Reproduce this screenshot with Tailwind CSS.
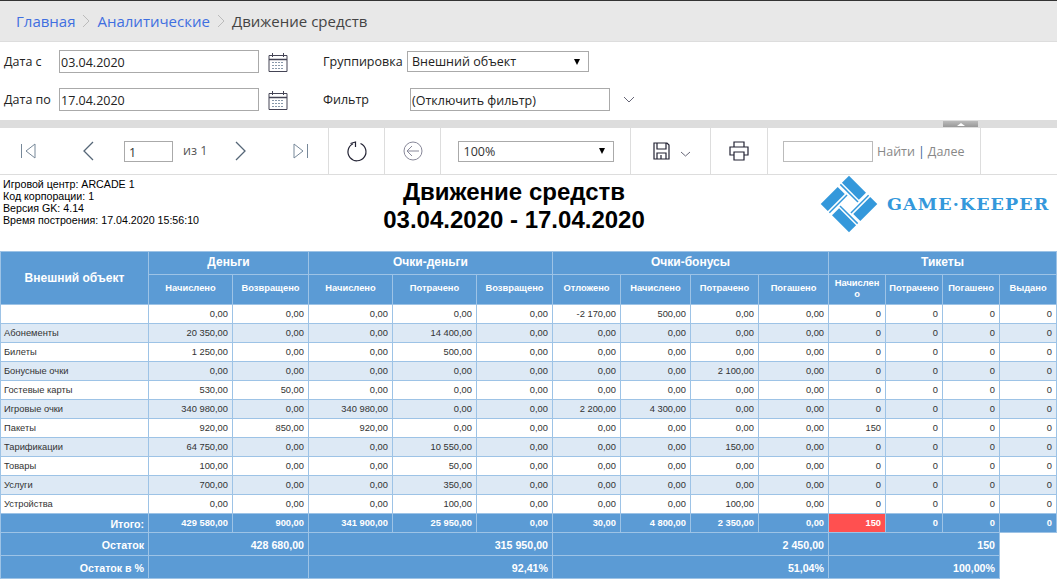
<!DOCTYPE html>
<html lang="ru">
<head>
    <meta charset="UTF-8">
    <title>Движение средств</title>
    <script src="https://cdn.jsdelivr.net/npm/@tailwindcss/browser@4"></script>
</head>
<body class="h-[580px] overflow-hidden bg-white font-['Open_Sans',sans-serif] text-[#333]">
    <!-- breadcrumb -->
    <div class="h-[42px] flex items-center pl-[16px] bg-[#e8e8e8] border-t border-t-[#333] border-b border-b-[#ddd] text-[15px]">
        <a class="text-[#3f6fe0]">Главная</a>
        <svg class="w-[8px] h-[14px] mx-[7px]" viewBox="0 0 8 14" fill="none" stroke="#bbb"><path d="M1 1l6 6-6 6"/></svg>
        <a class="text-[#3f6fe0]">Аналитические</a>
        <svg class="w-[8px] h-[14px] mx-[7px]" viewBox="0 0 8 14" fill="none" stroke="#bbb"><path d="M1 1l6 6-6 6"/></svg>
        <span class="text-[#444]">Движение средств</span>
    </div>

    <!-- filters -->
    <div class="h-[78px] pl-[4px] pt-[8px] text-[12.5px] text-[#222]">
        <div class="flex items-center h-[23px]">
            <span class="w-[55px] pt-[2px]">Дата с</span>
            <div class="w-[200px] h-[23px] border border-[#aaa] px-[1px] leading-[23px]">03.04.2020</div>
            <svg class="w-[20px] h-[21px] ml-[9px]" viewBox="0 0 20 21" fill="none" stroke="#445"><path d="M1 4.500h18v16H1zM4.500 2v4M15.500 2v4"/><path stroke-width="1.500" d="M1 8.500h18"/><path stroke-dasharray="2 1" stroke="#89a" d="M4 11.500h12M4 14.500h12M4 17.500h12"/></svg>
            <span class="ml-[35px] w-[84px] pt-[2px]">Группировка</span>
            <div class="w-[182px] h-[21px] border border-[#aaa] pl-[4px] pr-[8px] flex items-center justify-between"><span class="pt-[2px]">Внешний объект</span><span class="w-0 h-0 border-x-[3px] border-x-transparent border-t-[6px] border-t-black"></span></div>
        </div>
        <div class="flex items-center h-[23px] mt-[15px]">
            <span class="w-[55px] pt-[2px]">Дата по</span>
            <div class="w-[200px] h-[23px] border border-[#aaa] px-[1px] leading-[23px]">17.04.2020</div>
            <svg class="w-[20px] h-[21px] ml-[9px]" viewBox="0 0 20 21" fill="none" stroke="#445"><path d="M1 4.500h18v16H1zM4.500 2v4M15.500 2v4"/><path stroke-width="1.500" d="M1 8.500h18"/><path stroke-dasharray="2 1" stroke="#89a" d="M4 11.500h12M4 14.500h12M4 17.500h12"/></svg>
            <span class="ml-[35px] w-[87px] pt-[2px]">Фильтр</span>
            <div class="w-[200px] h-[23px] border border-[#aaa] pl-[1px] leading-[23px]">(Отключить фильтр)</div>
            <svg class="w-[12px] h-[7px] ml-[13px]" viewBox="0 0 12 7" fill="none" stroke="#667"><path d="M1 1l5 5 5-5"/></svg>
        </div>
    </div>

    <!-- splitter -->
    <div class="h-[8px] bg-[#ddd] relative">
        <div class="absolute left-[943px] top-[1px] w-[35px] h-[6px] bg-gradient-to-b from-[#bbb] to-[#999] flex items-center justify-center"><span class="w-0 h-0 border-x-[4px] border-x-transparent border-b-[3px] border-b-white"></span></div>
    </div>

    <!-- toolbar -->
    <div class="h-[47px] flex border-b border-[#ddd] text-[12.5px] text-[#555]">
        <div class="w-[329px] flex items-center border-r border-[#ddd]">
            <svg class="w-[16px] h-[16px] ml-[20px]" viewBox="0 0 16 16" fill="none" stroke="#789"><path d="M1.500 1v14M15 1L6 8l9 7z"/></svg>
            <svg class="w-[12px] h-[20px] ml-[46px]" viewBox="0 0 12 20" fill="none" stroke="#567" stroke-width="1.300"><path d="M11 1L2 10l9 9"/></svg>
            <div class="w-[49px] h-[21px] border border-[#aaa] ml-[30px] px-[4px] leading-[21px] text-[#333]">1</div>
            <span class="ml-[10px] pt-[1px]">из 1</span>
            <svg class="w-[12px] h-[20px] ml-[28px]" viewBox="0 0 12 20" fill="none" stroke="#567" stroke-width="1.300"><path d="M1 1l9 9-9 9"/></svg>
            <svg class="w-[16px] h-[16px] ml-[46px]" viewBox="0 0 16 16" fill="none" stroke="#789"><path d="M14.500 1v14M1 1l9 7-9 7z"/></svg>
        </div>
        <div class="w-[56px] flex items-center justify-center border-r border-[#ddd]">
            <svg class="w-[22px] h-[24px]" viewBox="0 0 22 24" fill="none" stroke="#223" stroke-width="1.200"><path d="M7 4.700A9 9 0 1 0 14.500 4.500"/><path d="M4.500 4.500L9.500 3v5"/></svg>
        </div>
        <div class="w-[56px] flex items-center justify-center border-r border-[#ddd]">
            <svg class="w-[20px] h-[20px]" viewBox="0 0 20 20" fill="none" stroke="#889"><circle cx="10" cy="10" r="9"/><path d="M16 10H4M9 5l-5 5 5 5"/></svg>
        </div>
        <div class="w-[190px] flex items-center justify-center border-r border-[#ddd]">
            <div class="w-[156px] h-[21px] border border-[#aaa] pl-[5px] pr-[8px] flex items-center justify-between text-[#333]"><span class="pt-[2px]">100%</span><span class="w-0 h-0 border-x-[3px] border-x-transparent border-t-[6px] border-t-black"></span></div>
        </div>
        <div class="w-[80px] flex items-center border-r border-[#ddd]">
            <svg class="w-[17px] h-[18px] ml-[22px]" viewBox="0 0 17 18" fill="none" stroke="#223" stroke-width="1.200"><path d="M1 1h13l2 2v14H1zM4 1v6h9V1M4 17v-6h9v6M8 13v4"/></svg>
            <svg class="w-[11px] h-[6px] ml-[10px] mt-[5px]" viewBox="0 0 11 6" fill="none" stroke="#667"><path d="M1 1l4.500 4 4.500-4"/></svg>
        </div>
        <div class="w-[57px] flex items-center justify-center border-r border-[#ddd]">
            <svg class="w-[20px] h-[20px]" viewBox="0 0 20 20" fill="none" stroke="#223" stroke-width="1.200"><path d="M5 6V1h10v5M5 14H1V6h18v8h-4M5 11h10v8H5z"/></svg>
        </div>
        <div class="w-[213px] flex items-center pl-[15px] border-r border-[#ddd]">
            <div class="w-[90px] h-[21px] border border-[#bbb]"></div>
            <span class="ml-[4px] pt-[2px] text-[#888]">Найти</span>
            <span class="mx-[3px] pt-[2px] text-[#369]">|</span>
            <span class="pt-[2px] text-[#888]">Далее</span>
        </div>
    </div>

    <!-- report header -->
    <div class="h-[76px] relative font-['Liberation_Sans',sans-serif] text-black">
        <div class="absolute left-[3px] top-[3px] text-[10.67px] leading-[12px]">
            <div>Игровой центр: ARCADE 1</div>
            <div>Код корпорации: 1</div>
            <div>Версия GK: 4.14</div>
            <div>Время построения: 17.04.2020 15:56:10</div>
        </div>
        <div class="text-center w-[1028px] pt-[3px] text-[24px] leading-[28px] font-bold">
            <div>Движение средств</div>
            <div>03.04.2020 - 17.04.2020</div>
        </div>
        <div class="absolute left-[820px] top-0 flex items-center">
            <svg class="w-[58px] h-[58px]" viewBox="-29 -29 58 58" fill="#3498db">
                <g transform="rotate(45)">
                    <g><rect x="-20" y="-20" width="24" height="10"/><rect x="-20" y="-8.500" width="25" height="1.500"/></g>
                    <g transform="rotate(90)"><rect x="-20" y="-20" width="24" height="10"/><rect x="-20" y="-8.500" width="25" height="1.500"/></g>
                    <g transform="rotate(180)"><rect x="-20" y="-20" width="24" height="10"/><rect x="-20" y="-8.500" width="25" height="1.500"/></g>
                    <g transform="rotate(270)"><rect x="-20" y="-20" width="24" height="10"/><rect x="-20" y="-8.500" width="25" height="1.500"/></g>
                </g>
            </svg>
            <span class="ml-[9px] font-['DejaVu_Serif',serif] font-bold text-[17.5px] text-[#3498db] tracking-[1.1px]">GAME·KEEPER</span>
        </div>
    </div>

    <!-- report table -->
    <table class="table-fixed w-[1057px] font-['Liberation_Sans',sans-serif] text-[9.33px] text-[#333] [&_td]:border [&_td]:border-[#9dc3e6] [&_td]:pl-[3px] [&_td]:pr-[4px] [&_td]:pt-[1px] [&_td]:text-right [&_th]:border [&_th]:border-[#9dc3e6] [&_th]:text-white [&_th]:bg-[#5b9bd5]">
        <colgroup>
            <col class="w-[148px]"><col class="w-[84px]"><col class="w-[76px]"><col class="w-[84px]"><col class="w-[84px]"><col class="w-[76px]"><col class="w-[68px]"><col class="w-[70px]"><col class="w-[68px]"><col class="w-[70px]"><col class="w-[57px]"><col class="w-[57px]"><col class="w-[57px]"><col class="w-[57px]">
        </colgroup>
        <thead>
            <tr class="h-[23px] text-[12px]">
                <th rowspan="2" class="text-[12px]">Внешний объект</th>
                <th colspan="2" class="pb-[2px]">Деньги</th>
                <th colspan="3" class="pb-[2px]">Очки-деньги</th>
                <th colspan="4" class="pb-[2px]">Очки-бонусы</th>
                <th colspan="4" class="pb-[2px]">Тикеты</th>
            </tr>
            <tr class="h-[30px] text-[9.33px] leading-[11px] [&_th]:pb-[2px]">
                <th>Начислено</th><th>Возвращено</th>
                <th>Начислено</th><th>Потрачено</th><th>Возвращено</th>
                <th>Отложено</th><th>Начислено</th><th>Потрачено</th><th>Погашено</th>
                <th>Начислен<br>о</th><th>Потрачено</th><th>Погашено</th><th>Выдано</th>
            </tr>
        </thead>
        <tbody class="[&_tr]:h-[19px] [&_tr:nth-child(even)]:bg-[#dde9f5] [&_td:first-child]:text-left">
            <tr><td></td><td>0,00</td><td>0,00</td><td>0,00</td><td>0,00</td><td>0,00</td><td>-2 170,00</td><td>500,00</td><td>0,00</td><td>0,00</td><td>0</td><td>0</td><td>0</td><td>0</td></tr>
            <tr><td>Абонементы</td><td>20 350,00</td><td>0,00</td><td>0,00</td><td>14 400,00</td><td>0,00</td><td>0,00</td><td>0,00</td><td>0,00</td><td>0,00</td><td>0</td><td>0</td><td>0</td><td>0</td></tr>
            <tr><td>Билеты</td><td>1 250,00</td><td>0,00</td><td>0,00</td><td>500,00</td><td>0,00</td><td>0,00</td><td>0,00</td><td>0,00</td><td>0,00</td><td>0</td><td>0</td><td>0</td><td>0</td></tr>
            <tr><td>Бонусные очки</td><td>0,00</td><td>0,00</td><td>0,00</td><td>0,00</td><td>0,00</td><td>0,00</td><td>0,00</td><td>2 100,00</td><td>0,00</td><td>0</td><td>0</td><td>0</td><td>0</td></tr>
            <tr><td>Гостевые карты</td><td>530,00</td><td>50,00</td><td>0,00</td><td>0,00</td><td>0,00</td><td>0,00</td><td>0,00</td><td>0,00</td><td>0,00</td><td>0</td><td>0</td><td>0</td><td>0</td></tr>
            <tr><td>Игровые очки</td><td>340 980,00</td><td>0,00</td><td>340 980,00</td><td>0,00</td><td>0,00</td><td>2 200,00</td><td>4 300,00</td><td>0,00</td><td>0,00</td><td>0</td><td>0</td><td>0</td><td>0</td></tr>
            <tr><td>Пакеты</td><td>920,00</td><td>850,00</td><td>920,00</td><td>0,00</td><td>0,00</td><td>0,00</td><td>0,00</td><td>0,00</td><td>0,00</td><td>150</td><td>0</td><td>0</td><td>0</td></tr>
            <tr><td>Тарификации</td><td>64 750,00</td><td>0,00</td><td>0,00</td><td>10 550,00</td><td>0,00</td><td>0,00</td><td>0,00</td><td>150,00</td><td>0,00</td><td>0</td><td>0</td><td>0</td><td>0</td></tr>
            <tr><td>Товары</td><td>100,00</td><td>0,00</td><td>0,00</td><td>50,00</td><td>0,00</td><td>0,00</td><td>0,00</td><td>0,00</td><td>0,00</td><td>0</td><td>0</td><td>0</td><td>0</td></tr>
            <tr><td>Услуги</td><td>700,00</td><td>0,00</td><td>0,00</td><td>350,00</td><td>0,00</td><td>0,00</td><td>0,00</td><td>0,00</td><td>0,00</td><td>0</td><td>0</td><td>0</td><td>0</td></tr>
            <tr><td>Устройства</td><td>0,00</td><td>0,00</td><td>0,00</td><td>100,00</td><td>0,00</td><td>0,00</td><td>0,00</td><td>100,00</td><td>0,00</td><td>0</td><td>0</td><td>0</td><td>0</td></tr>
        </tbody>
        <tfoot class="font-bold text-white [&_td]:bg-[#5b9bd5]">
            <tr class="h-[19px]">
                <td class="text-[10.67px]">Итого:</td><td>429 580,00</td><td>900,00</td><td>341 900,00</td><td>25 950,00</td><td>0,00</td><td>30,00</td><td>4 800,00</td><td>2 350,00</td><td>0,00</td><td class="!bg-[#ff5050]">150</td><td>0</td><td>0</td><td>0</td>
            </tr>
            <tr class="h-[23px] text-[10.67px]">
                <td>Остаток</td><td colspan="2">428 680,00</td><td colspan="3">315 950,00</td><td colspan="4">2 450,00</td><td colspan="3">150</td>
            </tr>
            <tr class="h-[23px] text-[10.67px]">
                <td>Остаток в %</td><td colspan="2"></td><td colspan="3">92,41%</td><td colspan="4">51,04%</td><td colspan="3">100,00%</td>
            </tr>
        </tfoot>
    </table>
</body>
</html>
